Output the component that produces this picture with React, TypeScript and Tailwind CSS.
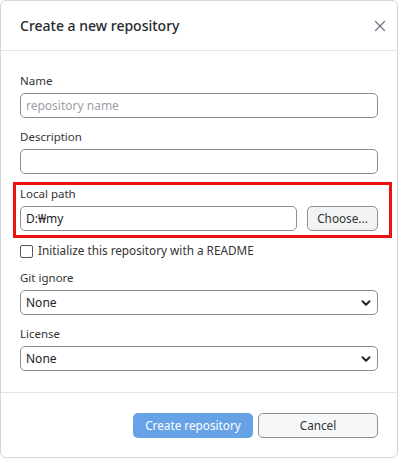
import { ChevronDown, X } from 'lucide-react';

const font = { fontFamily: '"Noto Sans", "Open Sans", sans-serif' };

function Label({ children }: { children: React.ReactNode }) {
  return <div className="text-[11.5px] leading-[16px] text-[#333] mb-[4px]">{children}</div>;
}

function Select() {
  return (
    <div className="h-[25px] w-full rounded-[5px] border border-[#8c8f94] flex items-center justify-between pl-[5px] pr-[4px] text-[12px] text-[#222]">
      <span>None</span>
      <ChevronDown className="h-[14px] w-[14px] text-[#222]" strokeWidth={3.2} />
    </div>
  );
}

export default function App() {
  return (
    <div
      className="w-[398px] h-[458px] bg-white border border-[#d4d6da] rounded-[6px] flex flex-col overflow-hidden"
      style={font}
    >
      {/* Header */}
      <div className="h-[50px] flex items-center justify-between pl-[19px] pr-[8px] border-b border-[#e1e4e8] shrink-0">
        <h1 className="text-[14px] font-medium text-[#24292e]">Create a new repository</h1>
        <X className="h-[18px] w-[18px] text-[#6a737d]" strokeWidth={1.6} />
      </div>

      {/* Body */}
      <div className="flex flex-col pl-[19px] pr-[19px] pt-[22px] pb-[21px] border-b border-[#e1e4e8] shrink-0">
        <Label>Name</Label>
        <div className="h-[25px] rounded-[5px] border border-[#8c8f94] flex items-center px-[5px] text-[12px] text-[#9ca0a6]">
          repository name
        </div>

        <div className="mt-[11px]">
          <Label>Description</Label>
          <div className="h-[25px] rounded-[5px] border border-[#8c8f94]" />
        </div>

        <div className="mt-[8px] -ml-[7px] -mr-[14px] border-[3px] border-[#ee1111] pl-[4px] pr-[11px] pt-[1px] pb-[4px]">
          <Label>Local path</Label>
          <div className="flex gap-[10px]">
            <div className="flex-1 h-[25px] rounded-[5px] border border-[#8c8f94] flex items-center px-[5px] text-[12px] text-[#222]">
              D:₩my
            </div>
            <button className="w-[71px] h-[25px] rounded-[5px] border border-[#8c8f94] bg-[#f2f3f5] text-[11.75px] text-[#333]">
              Choose...
            </button>
          </div>
        </div>

        <label className="mt-[5px] h-[16px] flex items-center gap-[5px] text-[11.75px] text-[#333]">
          <span className="h-[13px] w-[13px] rounded-[2px] border border-[#555] bg-white" />
          Initialize this repository with a README
        </label>

        <div className="mt-[11px]">
          <Label>Git ignore</Label>
          <Select />
        </div>

        <div className="mt-[11px]">
          <Label>License</Label>
          <Select />
        </div>
      </div>

      {/* Footer */}
      <div className="flex justify-end gap-[5px] pl-[20px] pr-[19px] pt-[20px]">
        <button className="w-[120px] h-[25px] rounded-[5px] bg-[#65a2e6] text-white text-[11.75px]">
          Create repository
        </button>
        <button className="w-[120px] h-[25px] rounded-[5px] border border-[#8c8f94] bg-[#f6f7f9] text-[11.75px] text-[#333]">
          Cancel
        </button>
      </div>
    </div>
  );
}
